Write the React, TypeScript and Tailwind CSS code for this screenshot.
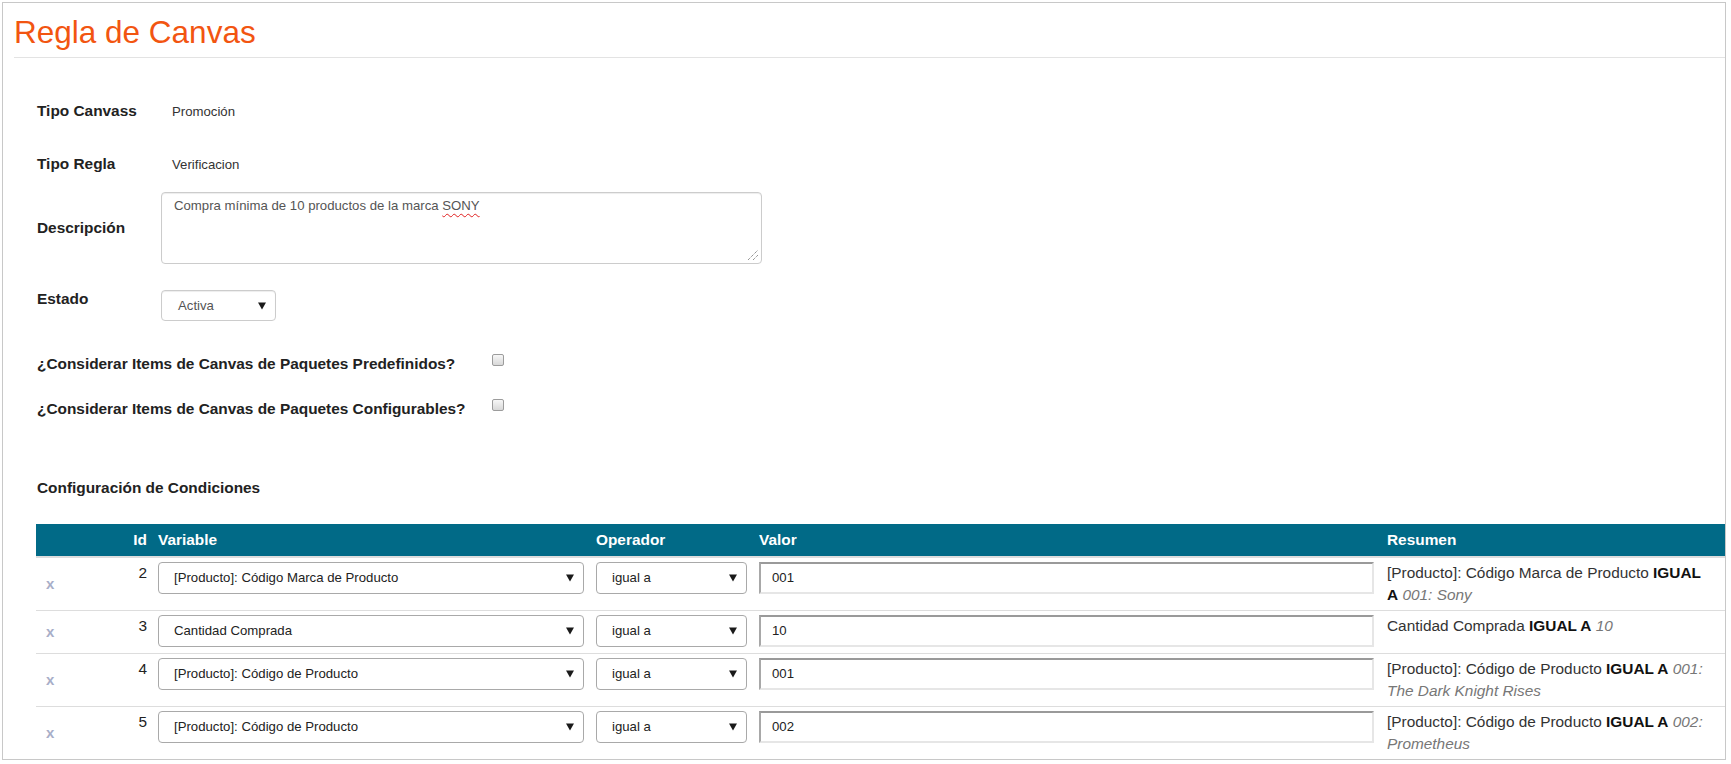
import React from "react";

const Arrow = () => (
  <svg width="8" height="8" viewBox="0 0 8 8" className="shrink-0">
    <path d="M0 0.5 L8 0.5 L4 7.5 Z" fill="#1a1a1a" />
  </svg>
);

type Row = {
  id: number;
  variable: string;
  valor: string;
  h: string;
  resumen: React.ReactNode;
};

const B = ({ children }: { children: React.ReactNode }) => <b className="text-[#111]">{children}</b>;
const I = ({ children }: { children: React.ReactNode }) => <i className="text-[#777]">{children}</i>;

const rows: Row[] = [
  {
    id: 2,
    variable: "[Producto]: Código Marca de Producto",
    valor: "001",
    h: "h-[53px]",
    resumen: (
      <>
        <span>[Producto]: Código Marca de Producto</span> <B>IGUAL</B> <B>A</B> <I>001:</I> <I>Sony</I>
      </>
    ),
  },
  {
    id: 3,
    variable: "Cantidad Comprada",
    valor: "10",
    h: "h-[43px]",
    resumen: (
      <>
        <span>Cantidad Comprada</span> <B>IGUAL A</B> <I>10</I>
      </>
    ),
  },
  {
    id: 4,
    variable: "[Producto]: Código de Producto",
    valor: "001",
    h: "h-[53px]",
    resumen: (
      <>
        <span>[Producto]: Código de Producto</span> <B>IGUAL A</B> <I>001:</I> <I>The Dark Knight Rises</I>
      </>
    ),
  },
  {
    id: 5,
    variable: "[Producto]: Código de Producto",
    valor: "002",
    h: "h-[52px]",
    resumen: (
      <>
        <span>[Producto]: Código de Producto</span> <B>IGUAL A</B> <I>002:</I> <I>Prometheus</I>
      </>
    ),
  },
];

const Checkbox = () => (
  <span className="block h-[12px] w-[12px] rounded-[2px] border border-[#9c9c9c] bg-linear-to-b from-[#f7f7f7] to-[#d8d8d8]" />
);

export default function App() {
  return (
    <div className="min-h-[764px] bg-white font-['Liberation_Sans',Arial,sans-serif] text-[#222]">
      <div className="ml-[2px] mt-[2px] w-[1724px] border border-[#c8c8c8]">
        <div className="pl-[11px]">
          <h1 className="mt-[12px] h-[35px] text-[31.5px] leading-[35px] text-[#f25511]">
            Regla de Canvas
          </h1>
          <div className="mt-[7px] h-px bg-[#e3e3e3]" />
        </div>

        <div className="pl-[33px]">
          {/* Tipo Canvass */}
          <div className="mt-[43px] flex h-[20px] items-baseline leading-[20px]">
            <div className="w-[125px] pl-[1px] text-[15.4px] font-bold">Tipo Canvass</div>
            <div className="pl-[11px] text-[13.2px] text-[#333]">Promoción</div>
          </div>

          {/* Tipo Regla */}
          <div className="mt-[33px] flex h-[20px] items-baseline leading-[20px]">
            <div className="w-[125px] pl-[1px] text-[15.4px] font-bold">Tipo Regla</div>
            <div className="pl-[11px] text-[13.2px] text-[#333]">Verificacion</div>
          </div>

          {/* Descripción */}
          <div className="mt-[18px] flex items-center">
            <div className="w-[125px] pl-[1px] text-[15.4px] font-bold leading-[20px]">Descripción</div>
            <div className="relative h-[72px] w-[601px] rounded-[4px] border border-[#cccccc] px-[12px] pt-[3px] text-[13.2px] leading-[19px] text-[#555] shadow-[inset_0_1px_1px_rgba(0,0,0,0.075)]">
              Compra mínima de 10 productos de la marca{" "}
              <span className="underline decoration-wavy decoration-[#e02020] decoration-1 underline-offset-[3px]">
                SONY
              </span>
              <svg
                width="12"
                height="12"
                viewBox="0 0 12 12"
                className="absolute bottom-[2px] right-[2px]"
              >
                <path d="M1 11 L11 1" stroke="#666" strokeWidth="1" strokeDasharray="1 1" />
                <path d="M6 11 L11 6" stroke="#666" strokeWidth="1" strokeDasharray="1 1" />
              </svg>
            </div>
          </div>

          {/* Estado */}
          <div className="mt-[26px] flex items-start">
            <div className="-mt-px w-[125px] pl-[1px] text-[15.4px] font-bold leading-[20px]">Estado</div>
            <div className="flex h-[31px] w-[115px] items-center justify-between rounded-[4px] border border-[#cccccc] pl-[16px] pr-[9px] text-[13.2px] text-[#555] shadow-[inset_0_1px_1px_rgba(0,0,0,0.075)]">
              <span>Activa</span>
              <Arrow />
            </div>
          </div>

          {/* Checkbox 1 */}
          <div className="mt-[33px] flex h-[20px] items-start">
            <div className="w-[456px] pl-[1px] text-[15.4px] font-bold leading-[20px]">
              ¿Considerar Items de Canvas de Paquetes Predefinidos?
            </div>
            <div>
              <Checkbox />
            </div>
          </div>

          {/* Checkbox 2 */}
          <div className="mt-[25px] flex h-[20px] items-start">
            <div className="w-[456px] pl-[1px] text-[15.4px] font-bold leading-[20px]">
              ¿Considerar Items de Canvas de Paquetes Configurables?
            </div>
            <div>
              <Checkbox />
            </div>
          </div>

          {/* Configuración */}
          <div className="mt-[59px] h-[20px] pl-[1px] text-[15.4px] font-bold leading-[20px]">
            Configuración de Condiciones
          </div>

          {/* Table */}
          <div className="mt-[26px]">
            <div className="grid h-[34px] grid-cols-[86px_28px_440px_163px_627px_345px] border-b-2 border-[#dddddd] bg-[#016a87] text-[15.4px] font-bold text-white">
              <div />
              <div className="flex items-center justify-end pr-[3px]">Id</div>
              <div className="flex items-center pl-[8px]">Variable</div>
              <div className="flex items-center pl-[6px]">Operador</div>
              <div className="flex items-center pl-[6px]">Valor</div>
              <div className="flex items-center pl-[7px]">Resumen</div>
            </div>

            {rows.map((r, i) => (
              <div
                key={r.id}
                className={`grid grid-cols-[86px_28px_440px_163px_627px_345px] ${r.h} ${
                  i < rows.length - 1 ? "border-b border-[#dddddd]" : ""
                }`}
              >
                <div className="flex items-center pl-[10px]">
                  <span className="-mt-[2px] text-[15px] font-bold leading-none text-[#a8aec8]">x</span>
                </div>
                <div className="pr-[3px] pt-[4px] text-right text-[15.4px] leading-[22px]">{r.id}</div>
                <div className="pl-[8px] pt-[4px]">
                  <div className="flex h-[32px] w-[426px] items-center justify-between rounded-[4px] border border-[#a9a9a9] bg-white pl-[15px] pr-[9px] text-[13.2px] text-[#222]">
                    <span>{r.variable}</span>
                    <Arrow />
                  </div>
                </div>
                <div className="pl-[6px] pt-[4px]">
                  <div className="flex h-[32px] w-[151px] items-center justify-between rounded-[4px] border border-[#a9a9a9] bg-white pl-[15px] pr-[9px] text-[13.2px] text-[#222]">
                    <span>igual a</span>
                    <Arrow />
                  </div>
                </div>
                <div className="pl-[6px] pt-[4px]">
                  <div className="flex h-[32px] w-[615px] items-center border-2 border-b-[#e6e6e6] border-l-[#a8a8a8] border-r-[#e6e6e6] border-t-[#9a9a9a] bg-white pl-[11px] text-[13.2px] text-[#222]">
                    {r.valor}
                  </div>
                </div>
                <div className="pl-[7px] pr-[12px] pt-[4px] text-[15.4px] leading-[22px] text-[#333]">
                  {r.resumen}
                </div>
              </div>
            ))}
          </div>
        </div>
      </div>
    </div>
  );
}
